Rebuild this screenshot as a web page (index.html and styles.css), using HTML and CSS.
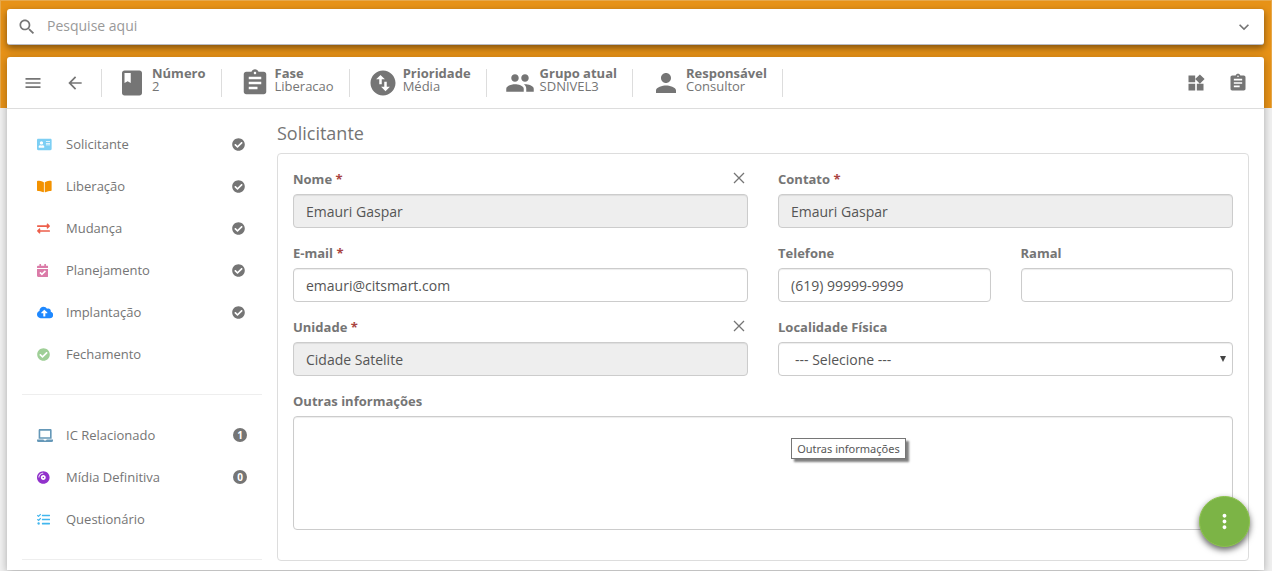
FILE: index.html
```html
<!DOCTYPE html>
<html lang="pt-BR">
<head>
<meta charset="utf-8">
<meta name="viewport" content="width=device-width, initial-scale=1">
<title>Solicitante</title>
<link rel="stylesheet" href="styles.css">
</head>
<body>
<svg class="sprite" aria-hidden="true">
  <symbol id="check-circle" viewBox="0 0 512 512"><path d="M504 256c0 136.967-111.033 248-248 248S8 392.967 8 256 119.033 8 256 8s248 111.033 248 248zM227.314 387.314l184-184c6.248-6.248 6.248-16.379 0-22.627l-22.627-22.627c-6.248-6.249-16.379-6.249-22.628 0L216 308.118l-70.059-70.059c-6.248-6.248-16.379-6.248-22.628 0l-22.627 22.627c-6.248 6.248-6.248 16.379 0 22.627l104 104c6.249 6.249 16.379 6.249 22.628.001z"/></symbol>
  <symbol id="assignment" viewBox="0 0 24 24"><path d="M19 3h-4.180C14.400 1.840 13.300 1 12 1c-1.300 0-2.400.84-2.820 2H5c-1.100 0-2 .9-2 2v14c0 1.100.9 2 2 2h14c1.100 0 2-.9 2-2V5c0-1.100-.9-2-2-2zm-7 0c.55 0 1 .45 1 1s-.45 1-1 1-1-.45-1-1 .45-1 1-1zm2 14H7v-2h7v2zm3-4H7v-2h10v2zm0-4H7V7h10v2z"/></symbol>
  <symbol id="clear" viewBox="0 0 12 12"><path d="M1 1l10 10M11 1L1 11" fill="none" stroke="currentColor" stroke-width="1.300"/></symbol>
</svg>

<form class="search" role="search">
  <svg class="icon-sm" viewBox="0 0 24 24"><path d="M15.500 14h-.79l-.28-.27C15.410 12.590 16 11.110 16 9.500 16 5.910 13.090 3 9.500 3S3 5.910 3 9.500 5.910 16 9.500 16c1.610 0 3.090-.59 4.230-1.570l.27.28v.79l5 4.990L20.490 19l-4.990-5zm-6 0C7.010 14 5 11.990 5 9.500S7.010 5 9.500 5 14 7.010 14 9.500 11.990 14 9.500 14z"/></svg>
  <input class="search-input" type="text" placeholder="Pesquise aqui" aria-label="Pesquise aqui">
  <button class="icon-button" type="button" aria-label="Expandir pesquisa">
    <svg class="icon-sm" viewBox="0 0 24 24"><path d="M16.590 8.590L12 13.170 7.410 8.590 6 10l6 6 6-6z"/></svg>
  </button>
</form>

<main class="card">
  <header class="toolbar">
    <div class="toolbar-nav">
      <button class="icon-button" type="button" aria-label="Menu">
        <svg class="icon-sm" viewBox="0 0 24 24"><path d="M3 18h18v-2H3v2zm0-5h18v-2H3v2zm0-7v2h18V6H3z"/></svg>
      </button>
      <button class="icon-button" type="button" aria-label="Voltar">
        <svg class="icon-sm" viewBox="0 0 24 24"><path d="M20 11H7.830l5.590-5.590L12 4l-8 8 8 8 1.410-1.410L7.830 13H20v-2z"/></svg>
      </button>
    </div>
    <dl class="facts">
      <div class="fact">
        <svg class="icon-lg" viewBox="0 0 24 24"><path d="M18 2H6c-1.100 0-2 .9-2 2v16c0 1.100.9 2 2 2h12c1.100 0 2-.9 2-2V4c0-1.100-.9-2-2-2zM6 4h5v8l-2.500-1.500L6 12V4z"/></svg>
        <div><dt>Número</dt><dd>2</dd></div>
      </div>
      <div class="fact">
        <svg class="icon-lg"><use href="#assignment"/></svg>
        <div><dt>Fase</dt><dd>Liberacao</dd></div>
      </div>
      <div class="fact">
        <svg class="icon-lg" viewBox="0 0 24 24"><path d="M12 2C6.480 2 2 6.480 2 12s4.480 10 10 10 10-4.480 10-10S17.520 2 12 2zM6.500 9L10 5.500 13.500 9H11v4H9V9H6.500zm11 6L14 18.500 10.500 15H13v-4h2v4h2.500z"/></svg>
        <div><dt>Prioridade</dt><dd>Média</dd></div>
      </div>
      <div class="fact">
        <svg class="icon-lg" viewBox="0 0 24 24"><path d="M16 11c1.660 0 2.990-1.340 2.990-3S17.660 5 16 5c-1.660 0-3 1.340-3 3s1.340 3 3 3zm-8 0c1.660 0 2.990-1.340 2.990-3S9.660 5 8 5C6.340 5 5 6.340 5 8s1.340 3 3 3zm0 2c-2.330 0-7 1.170-7 3.500V19h14v-2.500c0-2.330-4.670-3.500-7-3.500zm8 0c-.29 0-.62.02-.97.05 1.160.84 1.970 1.970 1.970 3.450V19h6v-2.500c0-2.330-4.670-3.500-7-3.500z"/></svg>
        <div><dt>Grupo atual</dt><dd>SDNIVEL3</dd></div>
      </div>
      <div class="fact">
        <svg class="icon-lg" viewBox="0 0 24 24"><path d="M12 12c2.210 0 4-1.790 4-4s-1.790-4-4-4-4 1.790-4 4 1.790 4 4 4zm0 2c-2.670 0-8 1.340-8 4v2h16v-2c0-2.660-5.330-4-8-4z"/></svg>
        <div><dt>Responsável</dt><dd>Consultor</dd></div>
      </div>
    </dl>
    <div class="toolbar-actions">
      <button class="icon-button" type="button" aria-label="Painéis">
        <svg class="icon-sm" viewBox="0 0 24 24"><path d="M13 13v8h8v-8h-8zM3 21h8v-8H3v8zM3 3v8h8V3H3zm13.660-1.310L11 7.340 16.660 13l5.660-5.660-5.660-5.650z"/></svg>
      </button>
      <button class="icon-button" type="button" aria-label="Atividades">
        <svg class="icon-sm"><use href="#assignment"/></svg>
      </button>
    </div>
  </header>

  <div class="layout">
    <nav class="sidebar" aria-label="Seções">
      <ul class="menu">
        <li><a class="menu-link" href="#">
          <span class="menu-icon sky"><svg viewBox="0 0 576 512"><path fill-rule="evenodd" d="M528 32H48C21.500 32 0 53.500 0 80v352c0 26.500 21.500 48 48 48h480c26.500 0 48-21.500 48-48V80c0-26.500-21.500-48-48-48zM176 128c35.300 0 64 28.700 64 64s-28.700 64-64 64-64-28.700-64-64 28.700-64 64-64zm112 236.800c0 10.600-10 19.200-22.400 19.200H86.400C74 384 64 375.400 64 364.800v-19.200c0-31.800 30.100-57.600 67.200-57.600h5c12.300 5.100 25.700 8 39.800 8s27.600-2.900 39.800-8h5c37.100 0 67.200 25.800 67.200 57.600v19.200zM352 128h160v32H352zM352 192h160v32H352zM352 256h160v32H352z"/></svg></span>
          <span class="menu-text">Solicitante</span>
          <span class="menu-status"><svg class="done"><use href="#check-circle"/></svg></span></a></li>
        <li><a class="menu-link" href="#">
          <span class="menu-icon orange"><svg viewBox="0 0 576 512"><path d="M542.220 32.050c-54.800 3.110-163.720 14.430-230.960 55.590-4.640 2.840-7.270 7.890-7.270 13.170v363.870c0 11.550 12.630 18.850 23.280 13.490 69.180-34.820 169.230-44.320 218.700-46.920 16.890-.89 30.020-14.430 30.020-30.660V62.750c.010-17.710-15.350-31.740-33.770-30.700zM264.730 87.640C197.500 46.480 88.580 35.170 33.780 32.050 15.360 31.010 0 45.040 0 62.750V400.600c0 16.240 13.130 29.780 30.020 30.660 49.490 2.600 149.590 12.110 218.770 46.950 10.620 5.350 23.210-1.940 23.210-13.460V100.630c0-5.290-2.620-10.140-7.270-12.990z"/></svg></span>
          <span class="menu-text">Liberação</span>
          <span class="menu-status"><svg class="done"><use href="#check-circle"/></svg></span></a></li>
        <li><a class="menu-link" href="#">
          <span class="menu-icon red"><svg viewBox="0 0 512 512"><path d="M0 168v-16c0-13.255 10.745-24 24-24h360V80c0-21.367 25.899-32.042 40.971-16.971l80 80c9.372 9.373 9.372 24.569 0 33.941l-80 80C409.956 271.982 384 261.456 384 240v-48H24c-13.255 0-24-10.745-24-24zm488 152H128v-48c0-21.314-25.862-32.080-40.971-16.971l-80 80c-9.372 9.373-9.372 24.569 0 33.941l80 80C102.057 463.997 128 453.437 128 432v-48h360c13.255 0 24-10.745 24-24v-16c0-13.255-10.745-24-24-24z"/></svg></span>
          <span class="menu-text">Mudança</span>
          <span class="menu-status"><svg class="done"><use href="#check-circle"/></svg></span></a></li>
        <li><a class="menu-link" href="#">
          <span class="menu-icon pink"><svg viewBox="0 0 448 512"><path d="M436 160H12c-6.627 0-12-5.373-12-12v-36c0-26.510 21.490-48 48-48h48V12c0-6.627 5.373-12 12-12h40c6.627 0 12 5.373 12 12v52h128V12c0-6.627 5.373-12 12-12h40c6.627 0 12 5.373 12 12v52h48c26.510 0 48 21.490 48 48v36c0 6.627-5.373 12-12 12zM12 192h424c6.627 0 12 5.373 12 12v260c0 26.510-21.490 48-48 48H48c-26.510 0-48-21.490-48-48V204c0-6.627 5.373-12 12-12zm333.296 95.947l-28.169-28.398c-4.667-4.705-12.265-4.736-16.970-.068L194.120 364.665l-45.980-46.352c-4.667-4.705-12.266-4.736-16.971-.068l-28.397 28.170c-4.705 4.667-4.736 12.265-.068 16.970l82.601 83.269c4.667 4.705 12.265 4.736 16.970.068l142.953-141.805c4.705-4.667 4.736-12.265.068-16.970z"/></svg></span>
          <span class="menu-text">Planejamento</span>
          <span class="menu-status"><svg class="done"><use href="#check-circle"/></svg></span></a></li>
        <li><a class="menu-link" href="#">
          <span class="menu-icon blue"><svg viewBox="0 0 640 512"><path d="M537.600 226.600c4.100-10.700 6.400-22.400 6.400-34.600 0-53-43-96-96-96-19.700 0-38.100 6-53.300 16.200C367 64.200 315.300 32 256 32c-88.400 0-160 71.600-160 160 0 2.700.1 5.400.2 8.100C40.200 219.800 0 273.200 0 336c0 79.500 64.500 144 144 144h368c70.700 0 128-57.300 128-128 0-61.900-44-113.600-102.400-125.400zM393.400 288H328v112c0 8.800-7.200 16-16 16h-48c-8.800 0-16-7.200-16-16V288h-65.400c-14.300 0-21.400-17.200-11.300-27.300l105.400-105.400c6.200-6.200 16.400-6.200 22.600 0l105.400 105.400c10.100 10.100 2.900 27.300-11.300 27.300z"/></svg></span>
          <span class="menu-text">Implantação</span>
          <span class="menu-status"><svg class="done"><use href="#check-circle"/></svg></span></a></li>
        <li><a class="menu-link" href="#">
          <span class="menu-icon green"><svg viewBox="0 0 512 512"><use href="#check-circle"/></svg></span>
          <span class="menu-text">Fechamento</span></a></li>
      </ul>
      <ul class="menu">
        <li><a class="menu-link" href="#">
          <span class="menu-icon steel"><svg viewBox="0 0 640 512"><path d="M624 416H381.540c-.74 19.810-14.710 32-32.740 32H288c-18.690 0-33.020-17.470-32.770-32H16c-8.800 0-16 7.200-16 16v16c0 35.200 28.800 64 64 64h512c35.200 0 64-28.800 64-64v-16c0-8.800-7.200-16-16-16zM576 48c0-26.400-21.600-48-48-48H112C85.600 0 64 21.600 64 48v336h512V48zm-64 272H128V64h384v256z"/></svg></span>
          <span class="menu-text">IC Relacionado</span>
          <span class="menu-status"><span class="badge">1</span></span></a></li>
        <li><a class="menu-link" href="#">
          <span class="menu-icon purple"><svg viewBox="0 0 496 512"><path d="M248 8C111 8 0 119 0 256s111 248 248 248 248-111 248-248S385 8 248 8zM88 256H56c0-105.900 86.100-192 192-192v32c-88.200 0-160 71.800-160 160zm160 96c-53 0-96-43-96-96s43-96 96-96 96 43 96 96-43 96-96 96zm0-128c-17.700 0-32 14.300-32 32s14.300 32 32 32 32-14.300 32-32-14.300-32-32-32z"/></svg></span>
          <span class="menu-text">Mídia Definitiva</span>
          <span class="menu-status"><span class="badge">0</span></span></a></li>
        <li><a class="menu-link" href="#">
          <span class="menu-icon cyan"><svg viewBox="0 0 512 512"><path d="M139.610 35.500a12 12 0 0 0-17 0L58.930 98.810l-22.700-22.120a12 12 0 0 0-17 0L3.530 92.410a12 12 0 0 0 0 17l47.590 47.400a12.780 12.780 0 0 0 17.610 0l15.590-15.620L156.520 69a12.090 12.090 0 0 0 .09-17zm0 159.190a12 12 0 0 0-17 0l-63.680 63.720-22.700-22.100a12 12 0 0 0-17 0L3.530 252a12 12 0 0 0 0 17L51 316.500a12.770 12.770 0 0 0 17.600 0l15.700-15.690 72.200-72.220a12 12 0 0 0 .09-16.900zM64 368c-26.490 0-48.590 21.500-48.590 48S37.530 464 64 464a48 48 0 0 0 0-96zm432 16H208a16 16 0 0 0-16 16v32a16 16 0 0 0 16 16h288a16 16 0 0 0 16-16v-32a16 16 0 0 0-16-16zm0-320H208a16 16 0 0 0-16 16v32a16 16 0 0 0 16 16h288a16 16 0 0 0 16-16V80a16 16 0 0 0-16-16zm0 160H208a16 16 0 0 0-16 16v32a16 16 0 0 0 16 16h288a16 16 0 0 0 16-16v-32a16 16 0 0 0-16-16z"/></svg></span>
          <span class="menu-text">Questionário</span></a></li>
      </ul>
    </nav>

    <section class="content">
      <h1 class="title">Solicitante</h1>
      <form class="panel">
        <div class="field">
          <div class="field-head">
            <label for="nome">Nome <span class="required">*</span></label>
            <button class="clear" type="button" aria-label="Limpar nome"><svg><use href="#clear"/></svg></button>
          </div>
          <input class="control" id="nome" type="text" value="Emauri Gaspar" readonly>
        </div>
        <div class="field">
          <div class="field-head"><label for="contato">Contato <span class="required">*</span></label></div>
          <input class="control" id="contato" type="text" value="Emauri Gaspar" readonly>
        </div>
        <div class="field">
          <div class="field-head"><label for="email">E-mail <span class="required">*</span></label></div>
          <input class="control" id="email" type="email" value="emauri@citsmart.com">
        </div>
        <div class="split">
          <div class="field">
            <div class="field-head"><label for="telefone">Telefone</label></div>
            <input class="control" id="telefone" type="tel" value="(619) 99999-9999">
          </div>
          <div class="field">
            <div class="field-head"><label for="ramal">Ramal</label></div>
            <input class="control" id="ramal" type="text">
          </div>
        </div>
        <div class="field">
          <div class="field-head">
            <label for="unidade">Unidade <span class="required">*</span></label>
            <button class="clear" type="button" aria-label="Limpar unidade"><svg><use href="#clear"/></svg></button>
          </div>
          <input class="control" id="unidade" type="text" value="Cidade Satelite" readonly>
        </div>
        <div class="field">
          <div class="field-head"><label for="localidade">Localidade Física</label></div>
          <div class="select-wrap">
            <select class="control select" id="localidade"><option>--- Selecione ---</option></select>
            <svg class="select-arrow" viewBox="0 0 6 6"><path d="M0 0h6L3 6z"/></svg>
          </div>
        </div>
        <div class="field wide">
          <div class="field-head"><label for="outras">Outras informações</label></div>
          <textarea class="control area" id="outras"></textarea>
          <div class="tooltip" role="tooltip">Outras informações</div>
        </div>
      </form>
    </section>
  </div>
</main>

<button class="fab" type="button" aria-label="Mais ações">
  <svg viewBox="0 0 24 24"><path d="M12 8c1.100 0 2-.9 2-2s-.9-2-2-2-2 .9-2 2 .9 2 2 2zm0 2c-1.100 0-2 .9-2 2s.9 2 2 2 2-.9 2-2-.9-2-2-2zm0 6c-1.100 0-2 .9-2 2s.9 2 2 2 2-.9 2-2-.9-2-2-2z"/></svg>
</button>
</body>
</html>
```

FILE: styles.css
```css
*,
*::before {
  box-sizing: border-box;
}

body {
  margin: 0;
  padding: 9px 8px 1px 7px;
  background: #f1f1f1;
  color: #757575;
  font: 13px/20px "Open Sans", sans-serif;
}

body::before {
  content: "";
  position: absolute;
  z-index: -1;
  top: 0;
  left: 0;
  right: 0;
  height: 108px;
  background: #e79217;
  border: 1px solid #e6a84b;
  border-bottom: 0;
}

svg {
  display: block;
  fill: currentColor;
}

button {
  padding: 0;
  border: 0;
  background: none;
  color: inherit;
  cursor: pointer;
}

.sprite {
  position: absolute;
  width: 0;
  height: 0;
}

.icon-sm {
  width: 20px;
  height: 20px;
  flex: none;
}

.icon-lg {
  width: 30px;
  height: 30px;
  flex: none;
}

.search {
  display: flex;
  align-items: center;
  gap: 10px;
  height: 36px;
  padding: 0 10px;
  margin-bottom: 12px;
  background: #fff;
  border-bottom: 1px solid #b9bcc6;
  border-radius: 3px;
  box-shadow: 0 3px 7px rgba(0, 0, 0, 0.45);
}

.search-input {
  flex: 1;
  min-width: 0;
  padding: 0 0 2px;
  border: 0;
  outline: 0;
  background: none;
  color: #555;
  font: 14px/20px "Open Sans", sans-serif;
}

.search-input::placeholder {
  color: #999;
  opacity: 1;
}

.card {
  background: #fff;
  border-radius: 3px 3px 0 0;
  box-shadow: 0 2px 8px rgba(0, 0, 0, 0.3);
}

.toolbar {
  display: flex;
  align-items: center;
  height: 52px;
  padding: 0 16px;
  border-bottom: 1px solid #ddd;
}

.toolbar-nav,
.toolbar-actions {
  display: flex;
  gap: 22px;
}

.toolbar-actions {
  margin-left: auto;
}

.facts {
  display: flex;
  margin: 0 0 0 16px;
  border-left: 1px solid #ddd;
}

.fact {
  display: flex;
  align-items: center;
  gap: 5px;
  height: 28px;
  padding: 0 15px 0 18px;
  border-right: 1px solid #ddd;
  line-height: 13px;
}

.fact:first-child {
  padding-left: 15px;
}

.fact > div {
  padding-bottom: 6px;
}

.fact dt {
  font-weight: 700;
}

.fact dd {
  margin: 0;
}

.layout {
  display: flex;
  gap: 15px;
  padding: 14px 15px 9px;
}

.sidebar {
  flex: 0 0 240px;
}

.menu {
  margin: 0 0 19px;
  padding: 0 0 19px;
  border-bottom: 1px solid #eee;
  list-style: none;
}

.menu:last-child {
  margin-bottom: 0;
}

.menu-link {
  display: flex;
  align-items: center;
  height: 42px;
  padding: 0 15px;
  color: inherit;
  text-decoration: none;
}

.menu-icon {
  flex: 0 0 29px;
}

.menu-icon svg {
  width: auto;
  height: 13px;
}

.menu-text {
  flex: 1;
}

.menu-status {
  flex: 0 0 15px;
}

.done {
  width: 13px;
  height: 13px;
}

.badge {
  display: block;
  width: 14px;
  height: 14px;
  margin-left: auto;
  border-radius: 50%;
  background: #757575;
  color: #fff;
  font-size: 10px;
  font-weight: 700;
  line-height: 14px;
  text-align: center;
}

.sky { color: #7dcff4; }
.orange { color: #f39200; }
.red { color: #ed5f4b; }
.pink { color: #db7ba8; }
.blue { color: #1e88ff; }
.green { color: #9fcf97; }
.steel { color: #6598b8; }
.purple { color: #9131cb; }
.cyan { color: #41b6ee; }

.content {
  flex: 1;
  min-width: 0;
}

.title {
  margin: 0 0 10px;
  font-size: 18px;
  font-weight: 400;
  line-height: 20px;
}

.panel {
  display: grid;
  grid-template-columns: 1fr 1fr;
  gap: 15px 30px;
  padding: 15px 15px 30px;
  border: 1px solid #ddd;
  border-radius: 4px;
}

.split {
  display: grid;
  grid-template-columns: 1fr 1fr;
  gap: 30px;
}

.field {
  position: relative;
  min-width: 0;
}

.wide {
  grid-column: 1 / -1;
}

.field-head {
  display: flex;
  justify-content: space-between;
  height: 20px;
  margin-bottom: 5px;
  font-weight: 700;
}

.required {
  color: #a94442;
}

.clear {
  width: 18px;
  height: 18px;
}

.clear svg {
  width: 12px;
  height: 12px;
  margin: 0 auto;
}

.control {
  display: block;
  width: 100%;
  height: 34px;
  padding: 0 12px;
  border: 1px solid #ccc;
  border-radius: 4px;
  background: #fff;
  box-shadow: inset 0 1px 1px rgba(0, 0, 0, 0.075);
  color: #555;
  font: 14px/20px "Open Sans", sans-serif;
}

.control:read-only:not(select) {
  background: #eee;
}

.select-wrap {
  position: relative;
}

.select {
  padding: 1px 16px 0;
  appearance: none;
}

.select-arrow {
  position: absolute;
  top: 14px;
  right: 7px;
  width: 6px;
  height: 6px;
  color: #444;
  pointer-events: none;
}

.area {
  height: 114px;
  padding: 6px 12px;
  resize: none;
}

.tooltip {
  position: absolute;
  top: 47px;
  left: 53%;
  padding: 1px 5px;
  border: 1px solid #767676;
  background: #fff;
  box-shadow: 3px 3px 2px rgba(0, 0, 0, 0.5);
  color: #575757;
  font: 11px/17px "Noto Sans", sans-serif;
  white-space: nowrap;
}

.fab {
  position: fixed;
  right: 22px;
  bottom: 24px;
  display: grid;
  place-items: center;
  width: 51px;
  height: 51px;
  border: 1px solid #8bc34a;
  border-radius: 50%;
  background: #7cb446;
  box-shadow: 0 3px 6px rgba(0, 0, 0, 0.6);
  color: #fff;
}

.fab svg {
  width: 23px;
  height: 23px;
}
```
